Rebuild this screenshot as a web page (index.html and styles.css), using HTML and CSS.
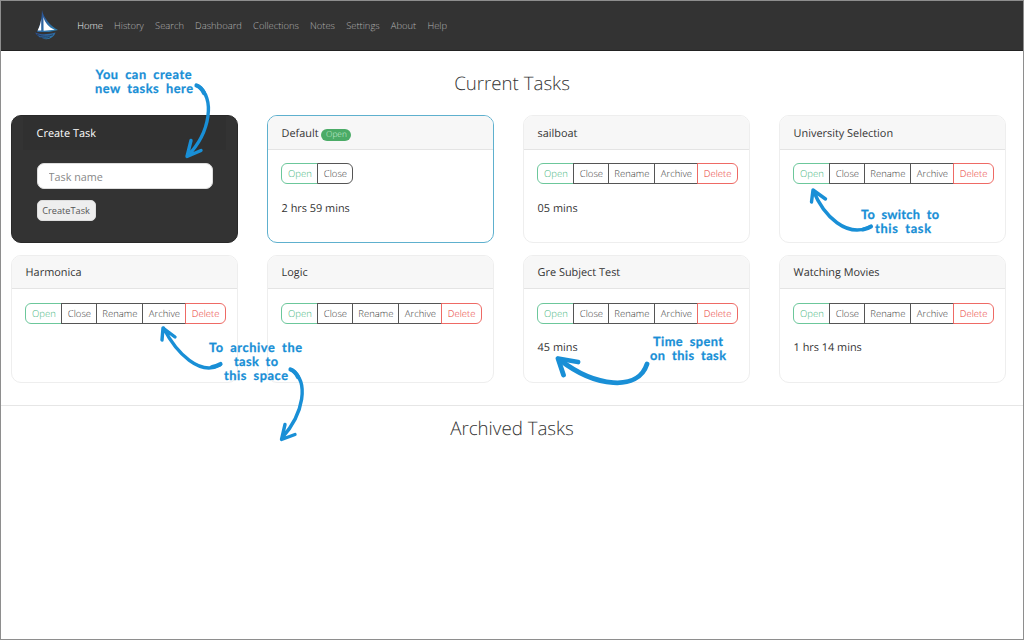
FILE: index.html
```html
<!DOCTYPE html>
<html lang="en">
<head>
<meta charset="utf-8">
<title>Tasks</title>
<link rel="stylesheet" href="styles.css">
</head>
<body>
<div class="window">
  <nav class="navbar">
    <svg class="logo" viewBox="0 0 24 30">
      <defs><linearGradient id="hull" x1="0" y1="0" x2="1" y2="1"><stop offset="0" stop-color="#2b4a91"/><stop offset="1" stop-color="#2f83b0"/></linearGradient></defs>
      <path d="M8 0C9 7 17 17 24 20L15 22H3C6 16 8 8 8 0Z" fill="url(#hull)"/>
      <path d="M7.2 9V20.5H3.600C5.500 17 6.700 13 7.200 9Z" fill="#fff"/>
      <path d="M9.400 7C11 13 15 17.500 20.800 19.700L9.600 20.800Z" fill="#fff"/>
      <path d="M1 22.400C7 25 14 24.500 21.500 22.500C20 28 13 31 8 28C5 27.500 3 25 1 22.400Z" fill="url(#hull)"/>
      <path d="M3 24.400C9 27 14 26.500 19 24.800M6 27.200C10 28.500 13 28.300 16 27" fill="none" stroke="#252f40" stroke-width=".7"/>
    </svg>
    <a class="nav-link active">Home</a><a class="nav-link">History</a><a class="nav-link">Search</a><a class="nav-link">Dashboard</a><a class="nav-link">Collections</a><a class="nav-link">Notes</a><a class="nav-link">Settings</a><a class="nav-link">About</a><a class="nav-link">Help</a>
  </nav>
  <main>
    <h1 class="title">Current Tasks</h1>
    <section class="tasks">
      <form class="card create">
        <div class="card-header">Create Task</div>
        <div class="card-body">
          <input class="task-input" placeholder="Task name">
          <button class="create-btn" type="button">CreateTask</button>
        </div>
      </form>
      <article class="card current">
        <div class="card-header">Default <span class="badge">Open</span></div>
        <div class="card-body">
          <div class="group"><span class="btn open">Open</span><span class="btn close">Close</span></div>
          <p class="time">2 hrs 59 mins</p>
        </div>
      </article>
      <article class="card">
        <div class="card-header">sailboat</div>
        <div class="card-body">
          <div class="group"><span class="btn open">Open</span><span class="btn close">Close</span><span class="btn rename">Rename</span><span class="btn archive">Archive</span><span class="btn delete">Delete</span></div>
          <p class="time">05 mins</p>
        </div>
      </article>
      <article class="card">
        <div class="card-header">University Selection</div>
        <div class="card-body">
          <div class="group"><span class="btn open">Open</span><span class="btn close">Close</span><span class="btn rename">Rename</span><span class="btn archive">Archive</span><span class="btn delete">Delete</span></div>
        </div>
      </article>
      <article class="card">
        <div class="card-header">Harmonica</div>
        <div class="card-body">
          <div class="group"><span class="btn open">Open</span><span class="btn close">Close</span><span class="btn rename">Rename</span><span class="btn archive">Archive</span><span class="btn delete">Delete</span></div>
        </div>
      </article>
      <article class="card">
        <div class="card-header">Logic</div>
        <div class="card-body">
          <div class="group"><span class="btn open">Open</span><span class="btn close">Close</span><span class="btn rename">Rename</span><span class="btn archive">Archive</span><span class="btn delete">Delete</span></div>
        </div>
      </article>
      <article class="card">
        <div class="card-header">Gre Subject Test</div>
        <div class="card-body">
          <div class="group"><span class="btn open">Open</span><span class="btn close">Close</span><span class="btn rename">Rename</span><span class="btn archive">Archive</span><span class="btn delete">Delete</span></div>
          <p class="time">45 mins</p>
        </div>
      </article>
      <article class="card">
        <div class="card-header">Watching Movies</div>
        <div class="card-body">
          <div class="group"><span class="btn open">Open</span><span class="btn close">Close</span><span class="btn rename">Rename</span><span class="btn archive">Archive</span><span class="btn delete">Delete</span></div>
          <p class="time">1 hrs 14 mins</p>
        </div>
      </article>
    </section>
    <section class="archived"><h1 class="title">Archived Tasks</h1></section>
  </main>
  <svg class="notes" viewBox="0 0 1024 640">
    <g class="note">
      <text x="95.5" y="79" textLength="96">You can create</text>
      <text x="95" y="93" textLength="98">new tasks here</text>
      <text x="861" y="219" textLength="78">To switch to</text>
      <text x="875" y="233" textLength="56">this task</text>
      <text x="209" y="352" textLength="93">To archive the</text>
      <text x="234" y="366" textLength="44">task to</text>
      <text x="224" y="380" textLength="64">this space</text>
      <text x="653" y="346" textLength="70">Time spent</text>
      <text x="650" y="360" textLength="76">on this task</text>
    </g>
    <g class="arrow">
      <path class="start" d="M196.500 85.500Q201 87 204 93"/>
      <path d="M198 86C215 97 211 132 187.500 156M191 140.500L187 156.500L201 150.500"/>
      <path class="start" d="M871 226.500Q867 229 863 229.500"/>
      <path d="M870 227C847 238 824 217 813 190M811.500 202L813 190L825.500 199"/>
      <path class="start" d="M220.500 364Q216 366.500 212 367"/>
      <path d="M220 365C200 376 177 354 163.500 328M162 340L163 328L175 337"/>
      <path class="start" d="M290.500 369.500Q295 371 298 377"/>
      <path d="M292 370C309 382 304 413 282 438M285 424.500L281.500 439.500L295 434.500"/>
      <path class="wide" d="M647 364C638 392 595 387 560 360"/>
      <path class="wide" d="M563.500 375L558 358.500L578 362"/>
    </g>
  </svg>
</div>
</body>
</html>
```
FILE: styles.css
```css
* { box-sizing: border-box; }
body { margin: 0; background: #fff; color: #333; font-family: "Open Sans", sans-serif; font-size: 10.9px; text-rendering: geometricPrecision; }
.window { position: relative; width: 1024px; height: 640px; border: 1px solid #8e8e8e; overflow: hidden; }
.navbar { display: flex; align-items: center; gap: 11.2px; height: 50px; padding: 0 0 0 32.6px; background: #333; border-bottom: 1px solid #222; }
.logo { width: 24px; height: 30px; margin: 0 8.4px 1px 0; }
.nav-link { color: #b4b4b4; font-size: 9.4px; font-weight: 300; line-height: 14px; }
.nav-link.active { color: #f4f4f4; }
.title { margin: 0; text-align: center; font-size: 18.7px; font-weight: 300; line-height: 26px; }
main > .title { padding: 20px 0 18px; }
.tasks { display: grid; grid-template-columns: repeat(4, 227.5px); grid-auto-rows: 128px; gap: 11.5px 28.5px; padding-left: 9.6px; }
.card { border: 1px solid #eee; border-radius: 10px; overflow: hidden; background: #fff; }
.card-header { height: 33.9px; padding: 0 14px; line-height: 35px; background: #f7f7f7; border-bottom: 1px solid #e4e4e4; }
.card:nth-child(n+5) .card-header { line-height: 33px; }
.card-body { padding: 13.5px 14px; }
.card.current { border-color: #5eb0ce; }
.card.create { background: #333; border-color: #292929; padding: 0 11px; }
.create .card-header { background: #303030; border-color: #303030; color: #fff; }
.task-input { display: block; width: 176px; height: 26px; padding: 0 11px; border: 1px solid #ddd; border-radius: 7px; background: #fff; font: 10.8px "Open Sans", sans-serif; }
.task-input::placeholder { color: #888; }
.create-btn { display: block; width: 59px; height: 21px; margin-top: 11px; padding: 0; border: 1px solid #ddd; border-radius: 5px; background: #eee; color: #555; font: 9.2px "Open Sans", sans-serif; }
.badge { display: inline-block; width: 30px; height: 12px; border-radius: 6px; background: #4bab67; color: #d0f0da; font-size: 8.3px; font-weight: 300; line-height: 12px; text-align: center; vertical-align: 0; }
.group { display: flex; height: 21px; margin-left: -.2px; }
.btn { flex: none; height: 21px; border: 1px solid #555; margin-left: -1px; text-align: center; font-size: 9.5px; font-weight: 300; line-height: 19.5px; color: #333; }
.btn:first-child { margin-left: 0; border-radius: 6px 0 0 6px; }
.btn:last-child { border-radius: 0 6px 6px 0; }
.btn.open { width: 37px; border-color: #6cc79b; color: #3fb57b; }
.btn.close { width: 36px; }
.btn.rename { width: 47px; }
.btn.archive { width: 44px; }
.btn.delete { width: 40.4px; border-color: #ee6a65; color: #e9322d; }
.time { margin: 16.6px 0 0; line-height: 16px; }
.archived { margin-top: 22px; padding-top: 10px; border-top: 1px solid #e6e6e6; }
.notes { position: absolute; left: -1px; top: -1px; width: 1024px; height: 640px; pointer-events: none; }
.note { fill: #198fd6; stroke: #198fd6; stroke-width: .25; stroke-linejoin: round; font-family: Lato, sans-serif; font-size: 12.8px; font-weight: 700; word-spacing: 3px; }
.arrow { fill: none; stroke: #198fd6; stroke-width: 3.4; stroke-linecap: round; stroke-linejoin: round; }
.arrow .start { stroke-width: 4.2; }
.arrow .wide { stroke-width: 4.8; }
```
